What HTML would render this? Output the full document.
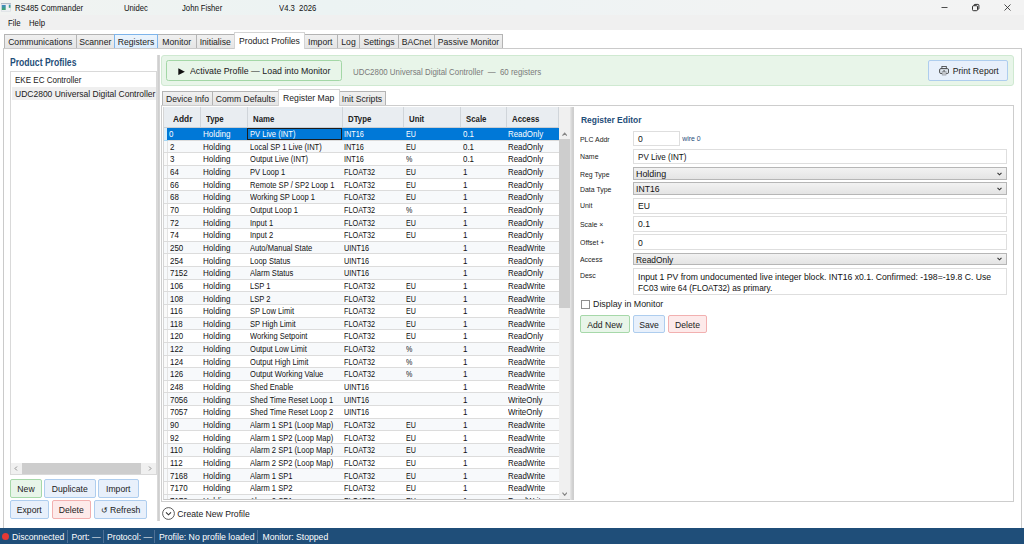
<!DOCTYPE html>
<html lang="en">
<head>
<meta charset="utf-8">
<title>RS485 Commander</title>
<style>
*{box-sizing:border-box;margin:0;padding:0}
html,body{width:1024px;height:544px;overflow:hidden;background:#fff}
body{font-family:"Liberation Sans",sans-serif;font-size:8.65px;color:#1a1a1a;position:relative}
.abs{position:absolute}
.nw{white-space:nowrap}
/* title bar */
#titlebar{left:0;top:0;width:1024px;height:15px;background:linear-gradient(90deg,#f1f3f1 0%,#ecf3f3 32%,#eef3f4 52%,#f2f3f3 75%,#f3f3f3 100%)}
#titlebar span{position:absolute;top:2.5px;font-size:8.8px;line-height:10px;color:#111;white-space:nowrap;transform:scaleX(0.875);transform-origin:0 50%}
#menubar{left:0;top:15px;width:1024px;height:15px;background:#f0f0f0}
#menubar span{position:absolute;top:3px;line-height:10px;font-size:8.65px;color:#111;transform:scaleX(0.9);transform-origin:0 50%}
/* main tabs */
.tab{position:absolute;top:34px;height:15px;border:1px solid #b4b4b4;border-left:none;background:linear-gradient(#f0f0f0,#e5e5e5);line-height:14.6px;text-align:center;white-space:nowrap;color:#222;font-size:8.65px}
.tab.first{border-left:1px solid #b4b4b4}
.tab.hot{background:linear-gradient(#ecf4fc,#dcecfc);border:1px solid #7eb4ea}
.tab.on{top:32px;height:17px;background:#fff;border:1px solid #d4d4d4;border-bottom:none;line-height:17.6px;z-index:3}
#tabbody{left:3px;top:48px;width:1019px;height:482px;border:1px solid #cacaca;background:#fff}
/* left pane */
h2{position:absolute;font-size:10px;font-weight:700;color:#1f4e79;white-space:nowrap;line-height:12px;transform-origin:0 50%}
#plist{left:10px;top:71px;width:147px;height:404px;border:1px solid #d9d9d9;background:#fff}
#plist .it{position:absolute;left:1px;width:143.5px;height:13.8px;line-height:14px;padding-left:3.1px;white-space:nowrap;overflow:hidden}
#plist .it span{display:inline-block;transform:scaleX(0.965);transform-origin:0 50%}
#plist .it.cur{background:#efefef}
#hscroll{position:absolute;left:0;bottom:0;width:145px;height:10.6px;background:#f0f0f0}
#hscroll .thumb{position:absolute;left:11.3px;top:0;width:118.5px;height:10.6px;background:#cdcdcd}
.btn{position:absolute;border:1px solid #aecdee;border-radius:2px;background:#e8f0fb;text-align:center;white-space:nowrap;color:#222;font-size:8.65px}
.btn.g{background:#e8f5e9;border-color:#a6d8a9}
.btn.r{background:#fdeaea;border-color:#f2b0b0}
.vsplit{position:absolute;background:#d4d4d4}
/* banner */
#banner{left:161px;top:55px;width:852.5px;height:31px;background:#e8f5e9;border:1px solid #cfe9d1;border-radius:3px}
#activate{left:166px;top:60px;width:176px;height:21px;border:1px solid #a3d7a6;border-radius:2.5px;background:#e8f5e9}
/* inner tabs */
.itab{position:absolute;top:91px;height:15px;border:1px solid #b4b4b4;border-left:none;background:linear-gradient(#f0f0f0,#e5e5e5);line-height:15.4px;text-align:center;white-space:nowrap;color:#222}
.itab.first{border-left:1px solid #b4b4b4}
.itab.on{top:89px;height:17px;background:#fff;border:1px solid #d4d4d4;border-bottom:none;line-height:16.5px;z-index:3}
#ibody{left:160.5px;top:105px;width:853.5px;height:397px;border:1px solid #cdcdcd;background:#fff}
/* grid */
#grid{left:163px;top:107px;width:407.5px;height:392.5px;overflow:hidden;border-left:1px solid #d6d6d6;border-bottom:1px solid #c8c8c8;background:#f0f0f0}
#grid table{border-collapse:collapse;table-layout:fixed;width:395px;font-size:8.5px;position:absolute;left:0;top:0}
#grid th{height:20.5px;background:#e9edf1;border-right:1px solid #d0d5da;border-bottom:1px solid #c9ced4;text-align:left;font-weight:700;font-size:8.5px;padding:4.5px 0 0 5.3px;color:#222;white-space:nowrap;overflow:hidden}
#grid th:first-child{border-right:none;padding:0}
#grid th span{display:inline-block;transform:scaleX(0.92);transform-origin:0 50%}
#grid td{height:12.65px;padding:0 0 0 1.9px;white-space:nowrap;overflow:hidden;border-bottom:1px solid #dcdcdc;line-height:11px;color:#111;background:#fff}
#grid td span{display:inline-block;transform-origin:0 50%;transform:scaleX(0.933);position:relative;top:0.9px}
#grid td:first-child{padding:0;border-right:1px solid #e4e4e4;background:#fafafa}
#grid tr.alt td{background:#f7f9fb}
#grid tr.sel td{background:#0078d7;color:#fff}
#grid tr.sel td:first-child{background:#d9eefb;border-top:1px solid #a6d8f6;border-bottom:1px solid #a6d8f6;border-right:none}
#grid td.c2{padding-left:2.2px}
#grid td.c2 span{transform:scaleX(0.952)}
#grid td.c3 span{transform:scaleX(0.89)}
#grid td.c4{padding-left:1.5px}
#grid td.c4 span{transform:scaleX(0.858)}
#grid td.c5{padding-left:2.5px}
#grid td.c5 span{transform:scaleX(0.84)}
#grid td.c6{padding-left:2px}
#grid td.c7{padding-left:1.8px}
#grid td.c7 span{transform:scaleX(0.928)}
#vscroll{position:absolute;left:395px;top:0;width:10.6px;height:392.5px;background:#f0f0f0}
#vscroll .thumb{position:absolute;left:0;top:31.8px;width:10.6px;height:168.8px;background:#cdcdcd}
/* editor */
.lbl{position:absolute;left:580.2px;font-size:7.3px;color:#222;white-space:nowrap;line-height:10px;transform:scaleX(0.95);transform-origin:0 50%;margin-top:0.7px}
.inp{position:absolute;left:633px;width:374px;height:15.5px;border:1px solid #dedede;background:#fff;padding-left:4px;line-height:13.5px;white-space:nowrap;font-size:8.65px;color:#111}
.cmb{position:absolute;left:633px;width:374px;height:12.5px;border:1px solid #b6b6b6;background:linear-gradient(#f2f2f2,#e4e4e4);padding-left:2px;line-height:10.5px;white-space:nowrap;font-size:8.65px;color:#111}
.cmb svg{position:absolute;right:4.5px;top:3.5px}
.tx{display:inline-block;transform-origin:0 50%;position:relative;top:0.7px}
/* status */
#status{left:0;top:528px;width:1024px;height:16px;background:#1f4e79;color:#fff}
#status span{position:absolute;top:3.5px;line-height:10px;white-space:nowrap;font-size:8.65px}
#status i{position:absolute;top:2px;width:1px;height:12.5px;background:#4d7096}
</style>
</head>
<body>
<div id="titlebar" class="abs">
  <svg class="abs" style="left:1.2px;top:3px" width="9.8" height="8.5" viewBox="0 0 9.8 8.5"><defs><linearGradient id="ig" x1="0" y1="0" x2="0" y2="1"><stop offset="0" stop-color="#3f86c8"/><stop offset="1" stop-color="#40a868"/></linearGradient></defs><rect width="9.8" height="8.5" fill="#d2d8df"/><rect width="9.8" height="0.8" fill="#a8b2be"/><rect x="0.6" y="1.3" width="8.6" height="6.6" fill="#eff1f3"/><rect x="0.8" y="2" width="3.9" height="5" fill="url(#ig)"/><rect x="7.8" y="1.7" width="1.7" height="3.1" fill="url(#ig)"/></svg>
  <span style="left:15px">RS485 Commander</span>
  <span style="left:124px">Unidec</span>
  <span style="left:181.5px">John Fisher</span>
  <span style="left:278.5px">V4.3&nbsp; 2026</span>
  <svg class="abs" style="left:940px;top:3px" width="74" height="10" viewBox="0 0 74 10" fill="none" stroke="#222" stroke-width="0.8"><path d="M1.5 4.5h6"/><rect x="32.5" y="2.7" width="5" height="5" rx="1.1" stroke-width="0.95"/><path d="M34 2.6v-0.3q0-0.9 0.9-0.9h3q1 0 1 1v3q0 0.9-0.9 0.9h-0.4" stroke-width="0.95"/><path d="M64.5 1.5l6 6M70.5 1.5l-6 6"/></svg>
</div>
<div id="menubar" class="abs"><span style="left:7.5px">File</span><span style="left:28.5px">Help</span></div>

<div class="tab first" style="left:4px;width:72.5px">Communications</div>
<div class="tab" style="left:76.5px;width:38.5px">Scanner</div>
<div class="tab hot" style="left:114px;width:44px">Registers</div>
<div class="tab" style="left:158px;width:38.5px">Monitor</div>
<div class="tab" style="left:196.5px;width:38.5px">Initialise</div>
<div class="tab on" style="left:234px;width:71px">Product Profiles</div>
<div class="tab" style="left:303.5px;width:34.5px">Import</div>
<div class="tab" style="left:338px;width:22px">Log</div>
<div class="tab" style="left:360px;width:39px">Settings</div>
<div class="tab" style="left:399px;width:36px">BACnet</div>
<div class="tab" style="left:435px;width:68px">Passive Monitor</div>

<div id="tabbody" class="abs"></div>

<h2 style="left:10px;top:57px;transform:scaleX(0.86)">Product Profiles</h2>
<div id="plist" class="abs">
  <div class="it" style="top:1px"><span style="transform:scaleX(0.93)">EKE EC Controller</span></div>
  <div class="it cur" style="top:14.7px"><span style="transform:scaleX(0.986)">UDC2800 Universal Digital Controller</span></div>
  <div id="hscroll">
    <div class="thumb"></div>
    <svg class="abs" style="left:3px;top:2.5px" width="4" height="5" viewBox="0 0 4 5" fill="none" stroke="#777" stroke-width="0.8"><path d="M3 0.5L1 2.5L3 4.5"/></svg>
    <svg class="abs" style="left:136.5px;top:2.5px" width="4" height="5" viewBox="0 0 4 5" fill="none" stroke="#777" stroke-width="0.8"><path d="M1 0.5L3 2.5L1 4.5"/></svg>
  </div>
</div>
<div class="btn g" style="left:10px;top:479px;width:32px;height:19px;line-height:18px">New</div>
<div class="btn" style="left:44px;top:479px;width:51.6px;height:19px;line-height:18px">Duplicate</div>
<div class="btn" style="left:98px;top:479px;width:40.5px;height:19px;line-height:18px">Import</div>
<div class="btn" style="left:10px;top:500px;width:38.5px;height:19px;line-height:18px">Export</div>
<div class="btn r" style="left:51.5px;top:500px;width:39.5px;height:19px;line-height:18px">Delete</div>
<div class="btn" style="left:94px;top:500px;width:53px;height:19px;line-height:18px"><span style="font-size:7.8px">↺</span>&nbsp;Refresh</div>

<div class="vsplit" style="left:157px;top:55px;width:3px;height:466px;background:linear-gradient(90deg,#dedede,#cfcfcf 50%,#d8d8d8)"></div>

<div id="banner" class="abs"></div>
<div id="activate" class="abs">
  <svg class="abs" style="left:11px;top:6.5px" width="7.5" height="7.5" viewBox="0 0 7 7"><path d="M0.3 0.2L6.4 3.4L0.3 6.6z" fill="#111"/></svg>
  <span class="abs nw" style="left:23.3px;top:4.5px;line-height:11px;transform:scaleX(1.02);transform-origin:0 50%">Activate Profile — Load into Monitor</span>
</div>
<span class="abs nw" style="left:352.5px;top:67px;line-height:10px;font-size:8.65px;color:#7a7a7a;transform:scaleX(0.915);transform-origin:0 50%">UDC2800 Universal Digital Controller &nbsp;—&nbsp; 60 registers</span>
<div class="btn" style="left:928px;top:60px;width:80px;height:21px;line-height:21px;padding-left:15.5px">Print Report
  <svg class="abs" style="left:9.8px;top:5px" width="10.2" height="9.6" viewBox="0 0 10.2 9.6"><rect x="2.9" y="0.5" width="4.4" height="2.6" fill="#e8f0fb" stroke="#3a3a3a" stroke-width="0.8"/><rect x="0.6" y="2.6" width="9" height="4.9" rx="1.3" fill="#dde4ec" stroke="#3a3a3a" stroke-width="0.9"/><rect x="3.1" y="5.7" width="4" height="3.4" fill="#c3c7cc" stroke="#8a8e94" stroke-width="0.5"/><rect x="4.2" y="4.5" width="1.8" height="0.9" fill="#333"/></svg>
</div>

<div class="itab first" style="left:162px;width:51px">Device Info</div>
<div class="itab" style="left:213px;width:66px">Comm Defaults</div>
<div class="itab on" style="left:278px;width:61.5px">Register Map</div>
<div class="itab" style="left:339px;width:47px">Init Scripts</div>
<div id="ibody" class="abs"></div>

<div id="grid" class="abs">
<table>
<colgroup><col style="width:3.3px"><col style="width:33.4px"><col style="width:47px"><col style="width:94.4px"><col style="width:61px"><col style="width:57.6px"><col style="width:46px"><col style="width:52.3px"></colgroup>
<thead><tr><th></th><th><span style="transform:scaleX(0.98)">Addr</span></th><th><span>Type</span></th><th><span>Name</span></th><th><span>DType</span></th><th><span>Unit</span></th><th><span>Scale</span></th><th><span>Access</span></th></tr></thead>
<tbody>
<tr class="sel"><td></td><td class="c1"><span>0</span></td><td class="c2"><span>Holding</span></td><td class="c3"><span>PV Live (INT)</span></td><td class="c4"><span>INT16</span></td><td class="c5"><span>EU</span></td><td class="c6"><span>0.1</span></td><td class="c7"><span>ReadOnly</span></td></tr>
<tr class="alt"><td></td><td class="c1"><span>2</span></td><td class="c2"><span>Holding</span></td><td class="c3"><span>Local SP 1 Live (INT)</span></td><td class="c4"><span>INT16</span></td><td class="c5"><span>EU</span></td><td class="c6"><span>0.1</span></td><td class="c7"><span>ReadOnly</span></td></tr>
<tr class=""><td></td><td class="c1"><span>3</span></td><td class="c2"><span>Holding</span></td><td class="c3"><span>Output Live (INT)</span></td><td class="c4"><span>INT16</span></td><td class="c5"><span>%</span></td><td class="c6"><span>0.1</span></td><td class="c7"><span>ReadOnly</span></td></tr>
<tr class="alt"><td></td><td class="c1"><span>64</span></td><td class="c2"><span>Holding</span></td><td class="c3"><span>PV Loop 1</span></td><td class="c4"><span>FLOAT32</span></td><td class="c5"><span>EU</span></td><td class="c6"><span>1</span></td><td class="c7"><span>ReadOnly</span></td></tr>
<tr class=""><td></td><td class="c1"><span>66</span></td><td class="c2"><span>Holding</span></td><td class="c3"><span>Remote SP / SP2 Loop 1</span></td><td class="c4"><span>FLOAT32</span></td><td class="c5"><span>EU</span></td><td class="c6"><span>1</span></td><td class="c7"><span>ReadOnly</span></td></tr>
<tr class="alt"><td></td><td class="c1"><span>68</span></td><td class="c2"><span>Holding</span></td><td class="c3"><span>Working SP Loop 1</span></td><td class="c4"><span>FLOAT32</span></td><td class="c5"><span>EU</span></td><td class="c6"><span>1</span></td><td class="c7"><span>ReadOnly</span></td></tr>
<tr class=""><td></td><td class="c1"><span>70</span></td><td class="c2"><span>Holding</span></td><td class="c3"><span>Output Loop 1</span></td><td class="c4"><span>FLOAT32</span></td><td class="c5"><span>%</span></td><td class="c6"><span>1</span></td><td class="c7"><span>ReadOnly</span></td></tr>
<tr class="alt"><td></td><td class="c1"><span>72</span></td><td class="c2"><span>Holding</span></td><td class="c3"><span>Input 1</span></td><td class="c4"><span>FLOAT32</span></td><td class="c5"><span>EU</span></td><td class="c6"><span>1</span></td><td class="c7"><span>ReadOnly</span></td></tr>
<tr class=""><td></td><td class="c1"><span>74</span></td><td class="c2"><span>Holding</span></td><td class="c3"><span>Input 2</span></td><td class="c4"><span>FLOAT32</span></td><td class="c5"><span>EU</span></td><td class="c6"><span>1</span></td><td class="c7"><span>ReadOnly</span></td></tr>
<tr class="alt"><td></td><td class="c1"><span>250</span></td><td class="c2"><span>Holding</span></td><td class="c3"><span>Auto/Manual State</span></td><td class="c4"><span>UINT16</span></td><td class="c5"><span></span></td><td class="c6"><span>1</span></td><td class="c7"><span>ReadWrite</span></td></tr>
<tr class=""><td></td><td class="c1"><span>254</span></td><td class="c2"><span>Holding</span></td><td class="c3"><span>Loop Status</span></td><td class="c4"><span>UINT16</span></td><td class="c5"><span></span></td><td class="c6"><span>1</span></td><td class="c7"><span>ReadOnly</span></td></tr>
<tr class="alt"><td></td><td class="c1"><span>7152</span></td><td class="c2"><span>Holding</span></td><td class="c3"><span>Alarm Status</span></td><td class="c4"><span>UINT16</span></td><td class="c5"><span></span></td><td class="c6"><span>1</span></td><td class="c7"><span>ReadOnly</span></td></tr>
<tr class=""><td></td><td class="c1"><span>106</span></td><td class="c2"><span>Holding</span></td><td class="c3"><span>LSP 1</span></td><td class="c4"><span>FLOAT32</span></td><td class="c5"><span>EU</span></td><td class="c6"><span>1</span></td><td class="c7"><span>ReadWrite</span></td></tr>
<tr class="alt"><td></td><td class="c1"><span>108</span></td><td class="c2"><span>Holding</span></td><td class="c3"><span>LSP 2</span></td><td class="c4"><span>FLOAT32</span></td><td class="c5"><span>EU</span></td><td class="c6"><span>1</span></td><td class="c7"><span>ReadWrite</span></td></tr>
<tr class=""><td></td><td class="c1"><span>116</span></td><td class="c2"><span>Holding</span></td><td class="c3"><span>SP Low Limit</span></td><td class="c4"><span>FLOAT32</span></td><td class="c5"><span>EU</span></td><td class="c6"><span>1</span></td><td class="c7"><span>ReadWrite</span></td></tr>
<tr class="alt"><td></td><td class="c1"><span>118</span></td><td class="c2"><span>Holding</span></td><td class="c3"><span>SP High Limit</span></td><td class="c4"><span>FLOAT32</span></td><td class="c5"><span>EU</span></td><td class="c6"><span>1</span></td><td class="c7"><span>ReadWrite</span></td></tr>
<tr class=""><td></td><td class="c1"><span>120</span></td><td class="c2"><span>Holding</span></td><td class="c3"><span>Working Setpoint</span></td><td class="c4"><span>FLOAT32</span></td><td class="c5"><span>EU</span></td><td class="c6"><span>1</span></td><td class="c7"><span>ReadOnly</span></td></tr>
<tr class="alt"><td></td><td class="c1"><span>122</span></td><td class="c2"><span>Holding</span></td><td class="c3"><span>Output Low Limit</span></td><td class="c4"><span>FLOAT32</span></td><td class="c5"><span>%</span></td><td class="c6"><span>1</span></td><td class="c7"><span>ReadWrite</span></td></tr>
<tr class=""><td></td><td class="c1"><span>124</span></td><td class="c2"><span>Holding</span></td><td class="c3"><span>Output High Limit</span></td><td class="c4"><span>FLOAT32</span></td><td class="c5"><span>%</span></td><td class="c6"><span>1</span></td><td class="c7"><span>ReadWrite</span></td></tr>
<tr class="alt"><td></td><td class="c1"><span>126</span></td><td class="c2"><span>Holding</span></td><td class="c3"><span>Output Working Value</span></td><td class="c4"><span>FLOAT32</span></td><td class="c5"><span>%</span></td><td class="c6"><span>1</span></td><td class="c7"><span>ReadWrite</span></td></tr>
<tr class=""><td></td><td class="c1"><span>248</span></td><td class="c2"><span>Holding</span></td><td class="c3"><span>Shed Enable</span></td><td class="c4"><span>UINT16</span></td><td class="c5"><span></span></td><td class="c6"><span>1</span></td><td class="c7"><span>ReadWrite</span></td></tr>
<tr class="alt"><td></td><td class="c1"><span>7056</span></td><td class="c2"><span>Holding</span></td><td class="c3"><span>Shed Time Reset Loop 1</span></td><td class="c4"><span>UINT16</span></td><td class="c5"><span></span></td><td class="c6"><span>1</span></td><td class="c7"><span>WriteOnly</span></td></tr>
<tr class=""><td></td><td class="c1"><span>7057</span></td><td class="c2"><span>Holding</span></td><td class="c3"><span>Shed Time Reset Loop 2</span></td><td class="c4"><span>UINT16</span></td><td class="c5"><span></span></td><td class="c6"><span>1</span></td><td class="c7"><span>WriteOnly</span></td></tr>
<tr class="alt"><td></td><td class="c1"><span>90</span></td><td class="c2"><span>Holding</span></td><td class="c3"><span>Alarm 1 SP1 (Loop Map)</span></td><td class="c4"><span>FLOAT32</span></td><td class="c5"><span>EU</span></td><td class="c6"><span>1</span></td><td class="c7"><span>ReadWrite</span></td></tr>
<tr class=""><td></td><td class="c1"><span>92</span></td><td class="c2"><span>Holding</span></td><td class="c3"><span>Alarm 1 SP2 (Loop Map)</span></td><td class="c4"><span>FLOAT32</span></td><td class="c5"><span>EU</span></td><td class="c6"><span>1</span></td><td class="c7"><span>ReadWrite</span></td></tr>
<tr class="alt"><td></td><td class="c1"><span>110</span></td><td class="c2"><span>Holding</span></td><td class="c3"><span>Alarm 2 SP1 (Loop Map)</span></td><td class="c4"><span>FLOAT32</span></td><td class="c5"><span>EU</span></td><td class="c6"><span>1</span></td><td class="c7"><span>ReadWrite</span></td></tr>
<tr class=""><td></td><td class="c1"><span>112</span></td><td class="c2"><span>Holding</span></td><td class="c3"><span>Alarm 2 SP2 (Loop Map)</span></td><td class="c4"><span>FLOAT32</span></td><td class="c5"><span>EU</span></td><td class="c6"><span>1</span></td><td class="c7"><span>ReadWrite</span></td></tr>
<tr class="alt"><td></td><td class="c1"><span>7168</span></td><td class="c2"><span>Holding</span></td><td class="c3"><span>Alarm 1 SP1</span></td><td class="c4"><span>FLOAT32</span></td><td class="c5"><span>EU</span></td><td class="c6"><span>1</span></td><td class="c7"><span>ReadWrite</span></td></tr>
<tr class=""><td></td><td class="c1"><span>7170</span></td><td class="c2"><span>Holding</span></td><td class="c3"><span>Alarm 1 SP2</span></td><td class="c4"><span>FLOAT32</span></td><td class="c5"><span>EU</span></td><td class="c6"><span>1</span></td><td class="c7"><span>ReadWrite</span></td></tr>
<tr class="alt"><td></td><td class="c1"><span>7172</span></td><td class="c2"><span>Holding</span></td><td class="c3"><span>Alarm 2 SP1</span></td><td class="c4"><span>FLOAT32</span></td><td class="c5"><span>EU</span></td><td class="c6"><span>1</span></td><td class="c7"><span>ReadWrite</span></td></tr>
</tbody>
</table>
<div class="abs" style="left:83px;top:21px;width:95px;height:12px;border:1px solid #1d1d1d"></div>
<div id="vscroll"><div class="thumb"></div>
  <svg class="abs" style="left:2.8px;top:24.8px" width="5.4" height="4.4" viewBox="0 0 5.4 4.4" fill="none" stroke="#858585" stroke-width="1.15"><path d="M0.5 3.7L2.7 1.1L4.9 3.7"/></svg>
  <svg class="abs" style="left:2.8px;top:384.5px" width="5.4" height="4.4" viewBox="0 0 5.4 4.4" fill="none" stroke="#858585" stroke-width="1.15"><path d="M0.5 0.7L2.7 3.3L4.9 0.7"/></svg>
</div>
</div>
<div class="vsplit" style="left:570px;top:107px;width:4px;height:392.5px;background:linear-gradient(90deg,#e8e8e8,#d2d2d2 55%,#cdcdcd)"></div>

<h2 style="left:580.5px;top:113.5px;font-size:9.4px;transform:scaleX(0.9)">Register Editor</h2>
<span class="lbl" style="top:134px">PLC Addr</span>
<div class="inp" style="top:130.5px;width:46.7px"><span class="tx" style="top:1.5px">0</span></div>
<span class="abs nw" style="left:682.3px;top:134px;font-size:6.9px;line-height:9px;color:#1f4e79">wire 0</span>
<span class="lbl" style="top:151.5px">Name</span>
<div class="inp" style="top:148.5px"><span class="tx" style="transform:scaleX(0.935);top:1.5px">PV Live (INT)</span></div>
<span class="lbl" style="top:169px">Reg Type</span>
<div class="cmb" style="top:167px"><span class="tx" style="transform:scaleX(1.03);top:1px">Holding</span><svg width="5" height="4" viewBox="0 0 5 4" fill="none" stroke="#333" stroke-width="1.1"><path d="M0.5 0.8L2.5 2.8L4.5 0.8"/></svg></div>
<span class="lbl" style="top:184px">Data Type</span>
<div class="cmb" style="top:182px"><span class="tx" style="top:1px">INT16</span><svg width="5" height="4" viewBox="0 0 5 4" fill="none" stroke="#333" stroke-width="1.1"><path d="M0.5 0.8L2.5 2.8L4.5 0.8"/></svg></div>
<span class="lbl" style="top:200.5px">Unit</span>
<div class="inp" style="top:198px"><span class="tx">EU</span></div>
<span class="lbl" style="top:219px">Scale ×</span>
<div class="inp" style="top:216px"><span class="tx">0.1</span></div>
<span class="lbl" style="top:237px">Offset +</span>
<div class="inp" style="top:234px"><span class="tx" style="top:1.5px">0</span></div>
<span class="lbl" style="top:254px">Access</span>
<div class="cmb" style="top:252.6px"><span class="tx" style="transform:scaleX(0.97);top:1px">ReadOnly</span><svg width="5" height="4" viewBox="0 0 5 4" fill="none" stroke="#333" stroke-width="1.1"><path d="M0.5 0.8L2.5 2.8L4.5 0.8"/></svg></div>
<span class="lbl" style="top:270px">Desc</span>
<div class="inp" style="top:268px;height:27px;line-height:11.5px;padding-top:2.5px;white-space:normal">Input 1 PV from undocumented live integer block. INT16 x0.1. Confirmed: -198=-19.8 C. Use<br><span style="display:inline-block;transform:scaleX(0.955);transform-origin:0 50%">FC03 wire 64 (FLOAT32) as primary.</span></div>
<div class="abs" style="left:580.6px;top:299.6px;width:9.5px;height:9.5px;border:1px solid #8f8f8f;background:#fff"></div>
<span class="abs nw" style="left:593.3px;top:299.3px;line-height:10px;transform:scaleX(1.025);transform-origin:0 50%">Display in Monitor</span>
<div class="btn g" style="left:580px;top:314.5px;width:49.5px;height:18.5px;line-height:18.6px">Add New</div>
<div class="btn" style="left:633px;top:314.5px;width:32px;height:18.5px;line-height:18.6px">Save</div>
<div class="btn r" style="left:668px;top:314.5px;width:39px;height:18.5px;line-height:18.6px">Delete</div>

<svg class="abs" style="left:161.9px;top:507px" width="13" height="13" viewBox="0 0 13 13" fill="none" stroke="#333"><circle cx="6.5" cy="6.5" r="5.9" stroke-width="0.8"/><path d="M4 5.3L6.5 7.8L9 5.3" stroke-width="1.1"/></svg>
<span class="abs nw" style="left:177.3px;top:509px;line-height:10px">Create New Profile</span>

<div id="status" class="abs">
  <div class="abs" style="left:2px;top:4.5px;width:7px;height:7px;border-radius:50%;background:#e53935"></div>
  <span style="left:12px">Disconnected</span><i style="left:66.5px"></i>
  <span style="left:71.5px">Port: —</span><i style="left:102.5px"></i>
  <span style="left:107px">Protocol: —</span><i style="left:153.5px"></i>
  <span style="left:159.3px;transform:scaleX(1.012);transform-origin:0 50%">Profile: No profile loaded</span><i style="left:256.5px"></i>
  <span style="left:262.5px">Monitor: Stopped</span>
</div>
</body>
</html>
